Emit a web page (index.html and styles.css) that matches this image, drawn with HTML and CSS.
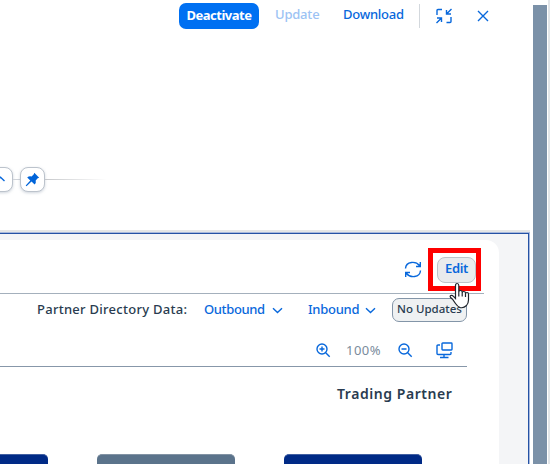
FILE: index.html
```html
<!DOCTYPE html>
<html lang="en">
<head>
<meta charset="utf-8">
<title>Trading Partner</title>
<link rel="stylesheet" href="styles.css">
</head>
<body>
<div class="app">
  <main class="page">
    <header class="toolbar">
      <button class="primary"><span class="t-deactivate">Deactivate</span></button>
      <span class="link disabled t-update">Update</span>
      <span class="link t-download">Download</span>
      <i class="divider"></i>
      <svg class="exit" width="16" height="16" viewBox="0 0 16 16"><path d="M1 7V2.500Q1 1.500 2 1.500H6M10.500 14.500H14Q15 14.500 15 13.500V9M15.500 1 10.500 6M10.500 2V6H15M.5 15 5.500 10M1 10H5.500V14"/></svg>
      <svg class="close" width="12" height="12" viewBox="0 0 12 12"><path d="M1 1 11 11M11 1 1 11"/></svg>
    </header>
    <div class="handle">
      <span class="knob first"><svg width="9" height="6" viewBox="0 0 9 6"><path d="M.5 5 4.500 1.200 8.500 5"/></svg></span>
      <i class="joint"></i>
      <span class="knob"><svg class="pin" width="15" height="15" viewBox="0 0 15 15"><path d="M9.300.8 14.200 5.700 12.700 6.300 10.700 8.500Q11.400 10.900 9.600 12.400L6.500 9.600 1.500 14.200.7 13.500 5.300 8.400 2.200 5.400Q4.200 3.600 6.600 4.400L8.800 2.300Z"/></svg></span>
      <i class="fade"></i>
    </div>
    <section class="panel">
      <div class="card">
        <div class="card-head">
          <svg class="refresh" width="18" height="17" viewBox="0 0 18 17"><path d="M1.500 7.500C2 0 12 0 15.500 4.500M16.300 1V5.500H12M16.500 9.500C16 17 6 17 2.500 12.500M1.700 16V11.500H6"/></svg>
          <div class="edit-wrap">
            <button class="edit"><span class="t-edit">Edit</span></button>
            <div class="highlight"></div>
            <svg class="cursor" width="21" height="28" viewBox="0 0 21 28"><path d="M6.500 16.500V3.500Q6.500 1.500 8.100 1.500T9.800 3.500V10Q9.800 8.500 11.500 8.500T13.200 10V11Q13.200 9.500 14.800 9.500T16.500 11V12Q16.500 10.500 18 10.500T19.500 12.200V18Q19.500 21 17.500 23.500Q14.500 26.500 11 25.500Q8.500 24.500 6.500 21.500L3.500 17.200 1.600 15.500Q.6 14.200 1.800 13.500 3 12.800 4.500 14.300ZM9.800 10V14.500M13.200 11V14.500M16.500 12V15"/></svg>
          </div>
        </div>
        <div class="data-row">
          <span class="label">Partner Directory Data:</span>
          <span class="link t-outbound">Outbound</span>
          <svg class="chev" width="11" height="7" viewBox="0 0 11 7"><path d="M1 1.200 5.500 5.600 10 1.200"/></svg>
          <span class="link t-inbound">Inbound</span>
          <svg class="chev" width="11" height="7" viewBox="0 0 11 7"><path d="M1 1.200 5.500 5.600 10 1.200"/></svg>
          <span class="badge"><span class="t-badge">No Updates</span></span>
        </div>
        <div class="zoom-row">
          <svg class="zin" width="15" height="15" viewBox="0 0 15 15"><circle cx="6" cy="6" r="5"/><path d="M9.700 9.700 13.700 13.700M3.500 6H8.500M6 3.500V8.500"/></svg>
          <span class="percent">100%</span>
          <svg class="zout" width="15" height="15" viewBox="0 0 15 15"><circle cx="6" cy="6" r="5"/><path d="M9.700 9.700 13.700 13.700M3.500 6H8.500"/></svg>
          <svg class="screen" width="17" height="17" viewBox="0 0 17 17"><path d="M4 3H2Q1 3 1 4V11.500Q1 12.500 2 12.500H14Q15 12.500 15 11.500V10M8 12.500V15.500M4 15.500H12.500M6.700 1H15.300Q16 1 16 1.700V7.300Q16 8 15.300 8H6.700Q6 8 6 7.300V1.700Q6 1 6.700 1Z"/></svg>
        </div>
        <h2><span class="t-title">Trading Partner</span></h2>
        <div class="blocks"><i class="navy partial"></i><i class="slate"></i><i class="navy"></i></div>
      </div>
    </section>
  </main>
  <aside class="scroll"></aside>
  <i class="edge"></i>
</div>
</body>
</html>
```
FILE: styles.css
```css
* { box-sizing: border-box; }
body { margin: 0; background: #fff; overflow: hidden; font: 500 13px/18px "Noto Sans", "Open Sans", sans-serif; color: #293c50; }
button { font: inherit; padding: 0; margin: 0; }
svg { display: block; flex: none; fill: none; stroke: #0868dc; stroke-width: 1.4; }
i { display: block; flex: none; }
span { white-space: nowrap; }
.app { display: flex; width: 550px; height: 464px; overflow: hidden; }
.page { width: 530px; height: 464px; display: flex; flex-direction: column; flex: none; overflow: hidden; }
.scroll { width: 14px; margin: 5px 0 0 3px; background: #7b91a8; flex: none; }
.edge { width: 2px; margin-left: 1px; background: #e2e5e8; }
.toolbar { height: 32px; flex: none; display: flex; align-items: center; padding-left: 179px; }
.primary { width: 80px; height: 26px; border: 0; border-radius: 7px; background: #0070f2; color: #fff; font-weight: 700; line-height: 22px; padding-bottom: 2px; letter-spacing: -.5px; }
.link { color: #0868dc; flex: none; padding-bottom: 2px; }
.toolbar .link { padding-bottom: 4px; }
.toolbar .disabled { color: #9cc3f4; }
.t-update { width: 45px; margin-left: 16px; letter-spacing: -.2px; }
.t-download { width: 62px; margin-left: 23px; letter-spacing: -.25px; }
.divider { width: 1px; height: 24px; margin-left: 14px; background: #d3d8dd; }
.exit { margin-left: 16px; }
.close { margin-left: 25px; }
.handle { height: 26px; margin-top: 134px; flex: none; display: flex; align-items: center; }
.knob { width: 25px; height: 25px; flex: none; display: flex; align-items: center; justify-content: center; border: 1px solid #bcc3cc; border-radius: 8px; box-shadow: 0 1px 3px #8493a866; background: #fff; }
.first { margin-left: -12px; }
.pin { fill: #0064d9; stroke: none; }
.joint { width: 7px; height: 1px; background: #d0d4da; }
.fade { width: 62px; height: 1px; background: linear-gradient(90deg, #c6c8cb, #fff); }
.panel { margin-top: 38px; height: 234px; border-top: 2px solid #e5e6e6; flex: none; background: #f4f5f7; box-shadow: inset -1px 1px #a8b9dc, inset -2px 2px #2552a5; padding-top: 8px; }
.card { width: 499px; height: 224px; background: #fff; border-radius: 0 13px 0 0; }
.card-head { width: 484px; height: 54px; display: flex; align-items: center; border-bottom: 1px solid #a4b0bc; padding: 6px 0 0 404px; }
.edit-wrap { position: relative; margin-left: 15px; width: 39px; height: 26px; }
.edit { width: 39px; height: 26px; border: 1px solid #bcc3ca; border-radius: 8px; background: #e9ebed; color: #0868dc; font-weight: 600; line-height: 20px; padding-bottom: 3px; letter-spacing: -.3px; }
.highlight { position: absolute; left: -9px; top: -9px; width: 53px; height: 43px; border: 5px solid #fe0000; }
.cursor { position: absolute; left: 12px; top: 25px; z-index: 2; fill: #fff; stroke: #20252c; stroke-width: 1.2; }
.data-row { height: 32px; display: flex; align-items: center; padding-left: 37px; }
.label { width: 167px; padding-bottom: 2px; letter-spacing: .27px; }
.t-outbound { width: 62px; letter-spacing: -.37px; }
.t-inbound { width: 51px; margin-left: 25px; letter-spacing: -.28px; }
.data-row .chev { margin-left: 6px; }
.badge { width: 75px; height: 24px; margin-left: 16px; flex: none; border: 1px solid #8395a8; border-radius: 7px; background: #eff1f2; font-size: 11.5px; line-height: 20px; text-align: center; }
.zoom-row { width: 467px; height: 41px; display: flex; align-items: center; border-bottom: 1px solid #8797a9; padding: 8px 0 0 316px; }
.percent { width: 35px; margin-left: 15px; color: #7a8b9c; font-weight: 400; letter-spacing: .45px; padding-bottom: 1px; }
.zout { margin-left: 17px; }
.screen { margin-left: 23px; }
h2 { width: 116px; height: 54px; margin: 0 0 0 337px; padding-top: 18px; font: 600 14px/18px "Noto Sans", sans-serif; letter-spacing: .56px; }
.blocks { display: flex; height: 10px; margin-top: 33px; }
.blocks i { width: 138px; border-radius: 5px 5px 0 0; border-top: 1px solid #4260a2; background: #002a86; }
.blocks i.slate { background: #5b738b; border-color: #8293a4; margin: 0 49px; }
.blocks i.partial { width: 48px; border-radius: 0 5px 0 0; }
```
